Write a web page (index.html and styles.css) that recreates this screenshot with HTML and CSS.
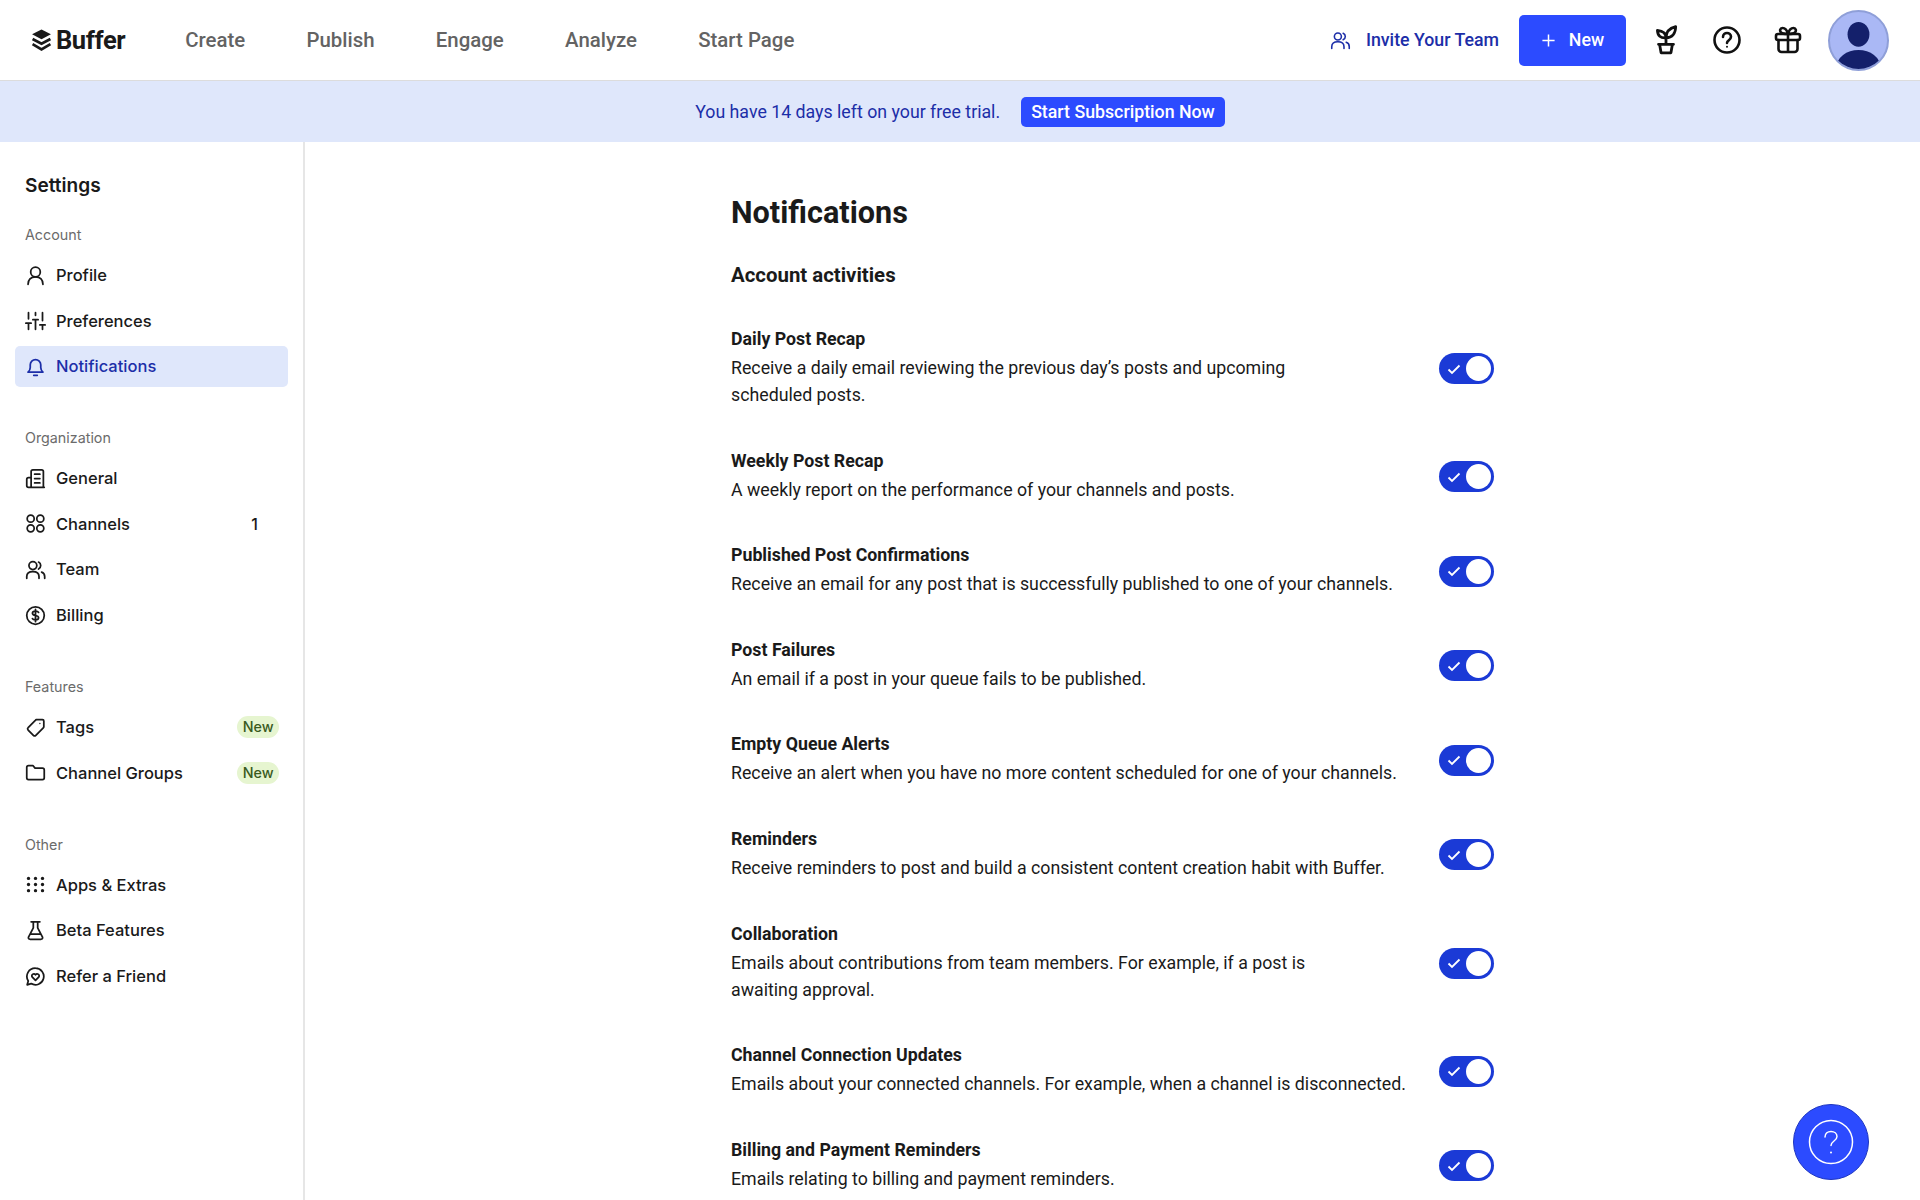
FILE: index.html
```html
<!DOCTYPE html>
<html>
  <head>
    <title>Notifications</title>
    <link rel="stylesheet" href="styles.css">
  </head>

  <body>
    <header class="topbar">
      <div class="logo">
        <svg class="logo-mark" viewBox="0 0 20 22"><path d="M10 0.5 19 5 10 9.8 1 5Z" fill="#1a1a1a"/><path d="M1.5 9.5 10 14 18.5 9.5" fill="none" stroke="#1a1a1a" stroke-width="2.6"/><path d="M1.5 14.5 10 19.5 18.5 14.5" fill="none" stroke="#1a1a1a" stroke-width="2.6"/></svg>
        <span>Buffer</span>
      </div>
      <nav class="main-nav">
        <a>Create</a>
        <a>Publish</a>
        <a>Engage</a>
        <a>Analyze</a>
        <a>Start Page</a>
      </nav>
      <div class="top-actions">
        <a class="invite">
          <svg class="icon" viewBox="0 0 24 24"><circle cx="9" cy="7.5" r="4"/><path d="M2 21v-2c0-3.3 2.7-5.5 7-5.5s7 2.2 7 5.5v2M15 3.8a4 4 0 0 1 0 7.4M18.5 14c2.2.7 3.500 2.500 3.500 5v2"/></svg>
          Invite Your Team
        </a>
        <a class="new-btn">
          <svg viewBox="0 0 16 16"><path d="M8 1.5v13M1.5 8h13"/></svg>
          New
        </a>
        <svg class="top-icon plant" viewBox="0 0 28 28"><path d="M8 18h12l-1.400 8H9.400ZM7 18h14M14 18v-6M14 12c0-4-2.500-6.500-8-7 0 5 3 7.500 8 7ZM14 12c0-5 3-9 9-10.500 0 6-3 10.500-9 10.500Z"/></svg>
        <svg class="top-icon" viewBox="0 0 28 28"><circle cx="14" cy="14" r="12.5"/><path d="M10 11c0-2.500 2-4 4-4s4 1.500 4 3.800c0 3.400-4 3.400-4 6.200"/><circle class="dot" cx="14" cy="20.8" r="1"/></svg>
        <svg class="top-icon" viewBox="0 0 28 28"><rect x="2" y="8" width="24" height="6" rx="2"/><path d="M4.500 14v9a3 3 0 0 0 3 3h13a3 3 0 0 0 3-3v-9M14 8v18M14 8c-1-4-3-6-5.500-6C6 2 5.500 5 7 6.500 8.500 8 11 8 14 8ZM14 8c1-4 3-6 5.500-6C22 2 22.500 5 21 6.500 19.500 8 17 8 14 8Z"/></svg>
        <div class="avatar">
          <svg viewBox="0 0 60 60"><ellipse cx="30" cy="23.5" rx="11.5" ry="13" fill="#14206b"/><ellipse cx="30" cy="58" rx="23" ry="18" fill="#14206b"/></svg>
        </div>
      </div>
    </header>

    <div class="trial-banner">
      <span>You have 14 days left on your free trial.</span>
      <a class="trial-btn">Start Subscription Now</a>
    </div>

    <div class="page">
      <aside class="sidebar">
        <h2>Settings</h2>

        <h3>Account</h3>
        <ul>
          <li>
            <svg class="icon" viewBox="0 0 24 24"><circle cx="12" cy="8" r="5.5"/><path d="M3.500 22c0-5 3-8.500 8.500-8.500s8.500 3.500 8.500 8.500"/></svg>
            Profile
          </li>
          <li>
            <svg class="icon" viewBox="0 0 24 24"><path d="M4 3v7M4 15v7M12 3v3M12 11v11M20 3v9M20 17v5M1 15h6M9 11h6M17 17h6"/></svg>
            Preferences
          </li>
          <li class="active">
            <svg class="icon" viewBox="0 0 24 24"><path d="M3.500 18.500c1.500-1.500 2.500-3 2.500-5.500v-3a6 6 0 0 1 12 0v3c0 2.500 1 4 2.500 5.500ZM10 22h4"/></svg>
            Notifications
          </li>
        </ul>

        <h3>Organization</h3>
        <ul>
          <li>
            <svg class="icon" viewBox="0 0 24 24"><path d="M7 22V4a2 2 0 0 1 2-2h10a2 2 0 0 1 2 2v18M7 11H4a2 2 0 0 0-2 2v7a2 2 0 0 0 2 2h18M11 7h6M11 12h6M11 17h6"/></svg>
            General
          </li>
          <li>
            <svg class="icon" viewBox="0 0 24 24"><circle cx="6.5" cy="6.5" r="4"/><circle cx="17.5" cy="6.5" r="4"/><circle cx="6.5" cy="17.5" r="4"/><circle cx="17.5" cy="17.5" r="4"/></svg>
            Channels
            <span class="count">1</span>
          </li>
          <li>
            <svg class="icon" viewBox="0 0 24 24"><circle cx="9" cy="7.5" r="4.5"/><path d="M2 22v-2c0-3.300 2.700-5.500 7-5.500s7 2.200 7 5.500v2M15.500 3.500a4.500 4.500 0 0 1 0 8M19 15c2 .7 3.500 2.500 3.500 5v2"/></svg>
            Team
          </li>
          <li>
            <svg class="icon" viewBox="0 0 24 24"><circle cx="12" cy="12" r="10"/><path d="M15.500 8.500c-.5-1-2-1.500-3.500-1.500-2 0-3.500 1-3.500 2.500s1.500 2.200 3.500 2.500 3.500 1 3.500 2.500-1.500 2.500-3.500 2.500c-1.500 0-3-.5-3.500-1.500M12 5v14"/></svg>
            Billing
          </li>
        </ul>

        <h3>Features</h3>
        <ul>
          <li>
            <svg class="icon" viewBox="0 0 24 24"><path d="M13 3h7a1.500 1.500 0 0 1 1.500 1.500V11a2 2 0 0 1-.6 1.400l-8.500 8.500a2 2 0 0 1-2.800 0l-6-6a2 2 0 0 1 0-2.800l8.500-8.500A2 2 0 0 1 13 3Z"/><circle class="dot" cx="17" cy="7.5" r=".8"/></svg>
            Tags
            <span class="new-tag">New</span>
          </li>
          <li>
            <svg class="icon" viewBox="0 0 24 24"><path d="M2 6a2 2 0 0 1 2-2h5l2.500 3H20a2 2 0 0 1 2 2v9a2 2 0 0 1-2 2H4a2 2 0 0 1-2-2Z"/></svg>
            Channel Groups
            <span class="new-tag">New</span>
          </li>
        </ul>

        <h3>Other</h3>
        <ul>
          <li>
            <svg class="icon" viewBox="0 0 24 24"><g class="dot"><circle cx="4" cy="5" r="1.9"/><circle cx="12" cy="5" r="1.9"/><circle cx="20" cy="5" r="1.9"/><circle cx="4" cy="12" r="1.9"/><circle cx="12" cy="12" r="1.9"/><circle cx="20" cy="12" r="1.9"/><circle cx="4" cy="19" r="1.9"/><circle cx="12" cy="19" r="1.9"/><circle cx="20" cy="19" r="1.9"/></g></svg>
            Apps &amp; Extras
          </li>
          <li>
            <svg class="icon" viewBox="0 0 24 24"><path d="M7 2h10M9.500 2v7L4 19.500A1.800 1.800 0 0 0 5.600 22h12.800a1.800 1.800 0 0 0 1.600-2.500L14.500 9V2M7 16h10"/></svg>
            Beta Features
          </li>
          <li>
            <svg class="icon" viewBox="0 0 24 24"><path d="M12 2.500a9.500 9.500 0 1 1-5 17.600L2.500 21.500l1.200-4.400A9.500 9.500 0 0 1 12 2.500Z"/><path d="M12 16.500l-3.600-3.700c-2-2.300 1.500-5.300 3.600-2.800 2.100-2.500 5.600.5 3.600 2.800Z"/></svg>
            Refer a Friend
          </li>
        </ul>
      </aside>

      <main class="content">
        <h1>Notifications</h1>
        <h2>Account activities</h2>

        <div class="setting">
          <div class="setting-text">
            <h4>Daily Post Recap</h4>
            <p>Receive a daily email reviewing the previous day’s posts and upcoming<br>scheduled posts.</p>
          </div>
          <div class="toggle"><svg viewBox="0 0 14 12"><path d="M1.500 6.500 5 10 12.500 2.500"/></svg><span class="knob"></span></div>
        </div>
        <div class="setting">
          <div class="setting-text">
            <h4>Weekly Post Recap</h4>
            <p>A weekly report on the performance of your channels and posts.</p>
          </div>
          <div class="toggle"><svg viewBox="0 0 14 12"><path d="M1.500 6.500 5 10 12.500 2.500"/></svg><span class="knob"></span></div>
        </div>
        <div class="setting">
          <div class="setting-text">
            <h4>Published Post Confirmations</h4>
            <p>Receive an email for any post that is successfully published to one of your channels.</p>
          </div>
          <div class="toggle"><svg viewBox="0 0 14 12"><path d="M1.500 6.500 5 10 12.500 2.500"/></svg><span class="knob"></span></div>
        </div>
        <div class="setting">
          <div class="setting-text">
            <h4>Post Failures</h4>
            <p>An email if a post in your queue fails to be published.</p>
          </div>
          <div class="toggle"><svg viewBox="0 0 14 12"><path d="M1.500 6.500 5 10 12.500 2.500"/></svg><span class="knob"></span></div>
        </div>
        <div class="setting">
          <div class="setting-text">
            <h4>Empty Queue Alerts</h4>
            <p>Receive an alert when you have no more content scheduled for one of your channels.</p>
          </div>
          <div class="toggle"><svg viewBox="0 0 14 12"><path d="M1.500 6.500 5 10 12.500 2.500"/></svg><span class="knob"></span></div>
        </div>
        <div class="setting">
          <div class="setting-text">
            <h4>Reminders</h4>
            <p>Receive reminders to post and build a consistent content creation habit with Buffer.</p>
          </div>
          <div class="toggle"><svg viewBox="0 0 14 12"><path d="M1.500 6.500 5 10 12.500 2.500"/></svg><span class="knob"></span></div>
        </div>
        <div class="setting">
          <div class="setting-text">
            <h4>Collaboration</h4>
            <p>Emails about contributions from team members. For example, if a post is<br>awaiting approval.</p>
          </div>
          <div class="toggle"><svg viewBox="0 0 14 12"><path d="M1.500 6.500 5 10 12.500 2.500"/></svg><span class="knob"></span></div>
        </div>
        <div class="setting">
          <div class="setting-text">
            <h4>Channel Connection Updates</h4>
            <p>Emails about your connected channels. For example, when a channel is disconnected.</p>
          </div>
          <div class="toggle"><svg viewBox="0 0 14 12"><path d="M1.500 6.500 5 10 12.500 2.500"/></svg><span class="knob"></span></div>
        </div>
        <div class="setting">
          <div class="setting-text">
            <h4>Billing and Payment Reminders</h4>
            <p>Emails relating to billing and payment reminders.</p>
          </div>
          <div class="toggle"><svg viewBox="0 0 14 12"><path d="M1.500 6.500 5 10 12.500 2.500"/></svg><span class="knob"></span></div>
        </div>
      </main>
    </div>

    <a class="help-fab">
      <svg viewBox="0 0 46 46"><circle cx="23" cy="23" r="21.5"/><path d="M17 18c0-3.500 2.800-5.500 6-5.500s6 2 6 5c0 4.500-6 4.500-6 9"/><circle class="fab-dot" cx="23" cy="33.5" r="1"/></svg>
    </a>
  </body>
</html>
```

FILE: styles.css
```css
* {
  box-sizing: border-box;
}

html,
body {
  height: 100%;
}

body {
  margin: 0;
  display: flex;
  flex-direction: column;
  overflow: hidden;
  background: #fff;
  color: #1a1a1a;
  font-family: Roboto, "Liberation Sans", sans-serif;
}

a {
  cursor: pointer;
}

.icon {
  width: 21px;
  height: 21px;
  flex: none;
  fill: none;
  stroke: currentColor;
  stroke-width: 2;
  stroke-linecap: round;
  stroke-linejoin: round;
}

.icon .dot {
  fill: currentColor;
  stroke: none;
}

/* top bar */
.topbar {
  display: flex;
  align-items: center;
  flex: none;
  height: 81px;
  padding: 0 31px;
  border-bottom: 1px solid #dcdcdc;
}

.logo {
  display: flex;
  align-items: center;
  gap: 4px;
  font-size: 25.5px;
  font-weight: 700;
  letter-spacing: -0.4px;
}

.logo-mark {
  width: 21px;
  height: 25px;
}

.main-nav {
  display: flex;
  gap: 61.3px;
  margin-left: 60px;
  font-size: 20.4px;
  font-weight: 500;
  color: #636363;
}

.top-actions {
  display: flex;
  align-items: center;
  margin-left: auto;
}

.invite {
  display: flex;
  align-items: center;
  gap: 15px;
  margin-right: 20px;
  font-size: 17.76px;
  font-weight: 500;
  color: #1c2ea8;
}

.invite .icon {
  stroke-width: 1.8;
}

.new-btn {
  display: flex;
  align-items: center;
  justify-content: center;
  gap: 13px;
  width: 107px;
  height: 51px;
  border-radius: 5px;
  background: #2c4bff;
  color: #fff;
  font-size: 17.76px;
  font-weight: 500;
}

.new-btn svg {
  width: 15px;
  height: 15px;
  fill: none;
  stroke: #fff;
  stroke-width: 1.6;
}

.top-icon {
  width: 28px;
  height: 28px;
  margin-left: 33px;
  fill: none;
  stroke: #111;
  stroke-width: 2.6;
  stroke-linecap: round;
  stroke-linejoin: round;
}

.top-icon.plant {
  width: 30px;
  height: 30px;
  margin-left: 25px;
  margin-right: -1px;
}

.top-icon .dot {
  fill: #111;
  stroke: none;
}

.avatar {
  width: 61px;
  height: 61px;
  margin-left: 26px;
  overflow: hidden;
  border: 2px solid #8f9fd8;
  border-radius: 50%;
  background: #aab8f5;
}

.avatar svg {
  display: block;
  width: 100%;
  height: 100%;
}

/* trial banner */
.trial-banner {
  display: flex;
  align-items: center;
  justify-content: center;
  flex: none;
  gap: 21px;
  height: 61px;
  background: #dfe7fb;
  color: #1c2ea8;
  font-size: 17.76px;
}

.trial-btn {
  padding: 5px 10px;
  border-radius: 5px;
  background: #2c4bff;
  color: #fff;
  font-weight: 500;
  line-height: 20px;
}

/* layout */
.page {
  display: flex;
  flex: 1;
  min-height: 0;
}

.sidebar {
  flex: none;
  width: 305px;
  padding: 29px 15px 0;
  border-right: 2px solid #e6e6e6;
}

.sidebar h2 {
  margin: 0 0 0 10px;
  font-family: Inter, Roboto, sans-serif;
  font-size: 19.1px;
  font-weight: 600;
  line-height: 28px;
}

.sidebar h3 {
  margin: 26px 0 0 10px;
  font-family: Inter, Roboto, sans-serif;
  font-size: 14.3px;
  font-weight: 400;
  line-height: 20px;
  color: #6b6b6b;
}

.sidebar ul {
  margin: 9.5px 0 41.6px;
  padding: 0;
  list-style: none;
}

.sidebar ul + h3 {
  margin-top: 0;
}

.sidebar li {
  display: flex;
  align-items: center;
  gap: 10px;
  height: 41px;
  margin-bottom: 4.6px;
  padding: 0 10px;
  border-radius: 5px;
  font-family: Inter, Roboto, sans-serif;
  font-size: 16.5px;
  font-weight: 500;
}

.sidebar li.active {
  background: #dfe7fb;
  color: #1c2ea8;
}

.count {
  margin-left: auto;
  margin-right: 20px;
  font-size: 16px;
}

.new-tag {
  margin-left: auto;
  margin-right: -1px;
  padding: 2px 5.5px;
  border-radius: 11px;
  background: #e6f5d0;
  color: #3a5a1e;
  font-size: 14.3px;
  line-height: 18px;
}

/* notifications list */
.content {
  flex: 1;
  padding: 51px 0 0 426px;
  overflow: hidden;
}

.content h1 {
  margin: 0;
  font-size: 30.6px;
  font-weight: 700;
  line-height: 40px;
}

.content > h2 {
  margin: 28px 0 18px;
  font-size: 20.4px;
  font-weight: 700;
  line-height: 28px;
}

.setting {
  display: flex;
  align-items: center;
  justify-content: space-between;
  width: 763px;
  padding: 19px 0 19.6px;
}

.setting h4 {
  margin: 0 0 2px;
  font-size: 17.76px;
  font-weight: 700;
  line-height: 27px;
}

.setting p {
  margin: 0;
  font-size: 17.76px;
  line-height: 27px;
}

.toggle {
  display: flex;
  align-items: center;
  justify-content: space-between;
  flex: none;
  width: 55px;
  height: 31px;
  margin-top: 2px;
  padding: 0 3px 0 8px;
  border-radius: 16px;
  background: #1b3ad6;
}

.toggle svg {
  width: 14px;
  height: 12px;
  fill: none;
  stroke: #fff;
  stroke-width: 1.8;
}

.knob {
  width: 25px;
  height: 25px;
  border-radius: 50%;
  background: #fff;
}

.help-fab {
  position: absolute;
  right: 51px;
  bottom: 20px;
  display: flex;
  align-items: center;
  justify-content: center;
  width: 76px;
  height: 76px;
  border: 1px solid #1e36c0;
  border-radius: 50%;
  background: #2c4bff;
}

.help-fab svg {
  width: 46px;
  height: 46px;
  fill: none;
  stroke: #fff;
  stroke-width: 1.5;
  stroke-linecap: round;
}

.help-fab .fab-dot {
  fill: #fff;
  stroke: none;
}
```
